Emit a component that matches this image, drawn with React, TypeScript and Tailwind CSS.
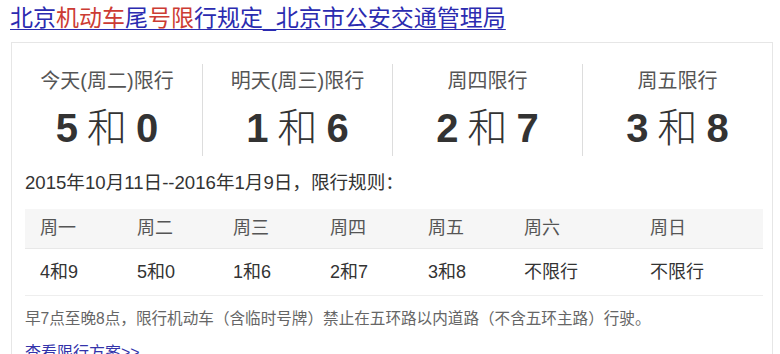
const font = { fontFamily: '"Liberation Sans", "Noto Sans CJK SC", sans-serif' };

const days = [
  { label: '今天(周二)限行', nums: ['5', '0'] },
  { label: '明天(周三)限行', nums: ['1', '6'] },
  { label: '周四限行', nums: ['2', '7'] },
  { label: '周五限行', nums: ['3', '8'] },
];

const week = [
  ['周一', '4和9'],
  ['周二', '5和0'],
  ['周三', '1和6'],
  ['周四', '2和7'],
  ['周五', '3和8'],
  ['周六', '不限行'],
  ['周日', '不限行'],
];

export default function App() {
  return (
    <div className="bg-white w-[780px] h-[354px] overflow-hidden" style={font}>
      <div className="pl-[10px] pt-[3px] text-[23px] leading-[30px] text-[#2b2bb0]">
        <a className="underline decoration-1 underline-offset-[3px] cursor-pointer">
          北京<span className="text-[#cc3b33]">机动车</span>尾<span className="text-[#cc3b33]">号限</span>行规定_北京市公安交通管理局
        </a>
      </div>

      <div className="ml-[11px] mt-[9px] w-[762px] border border-[#e6e6e6] pt-[21px] pl-[13px] pr-[8px]">
        <div className="grid grid-cols-4 -ml-[13px] -mr-[8px]">
          {days.map((d, i) => (
            <div key={i} className={`flex flex-col items-center h-[92px] ${i > 0 ? 'border-l border-[#dddddd]' : ''}`}>
              <div className="mt-[3px] text-[20px] leading-[28px] text-[#555]">{d.label}</div>
              <div className="mt-[9px] text-[40px] leading-[48px] text-[#333] flex items-center">
                <span className="font-bold">{d.nums[0]}</span>
                <span className="mx-[9px] font-light">和</span>
                <span className="font-bold">{d.nums[1]}</span>
              </div>
            </div>
          ))}
        </div>

        <div className="mt-[13px] text-[18.6px] leading-[28px] text-[#333]">2015年10月11日--2016年1月9日，限行规则：</div>

        <div className="mt-[12px] w-[738px] text-[18px] text-[#333]">
          <div className="grid grid-cols-[97px_96px_97px_98px_96px_126px_1fr] bg-[#f6f6f6] h-[40px] items-center border-b border-[#e8e8e8] text-[#555]">
            {week.map(w => (
              <div key={w[0]} className="pl-[15px]">{w[0]}</div>
            ))}
          </div>
          <div className="grid grid-cols-[97px_96px_97px_98px_96px_126px_1fr] h-[47px] items-center border-b border-[#eeeeee]">
            {week.map(w => (
              <div key={w[0]} className="pl-[15px]">{w[1]}</div>
            ))}
          </div>
        </div>

        <div className="mt-[9px] text-[15.6px] leading-[28px] text-[#666]">
          早7点至晚8点，限行机动车（含临时号牌）禁止在五环路以内道路（不含五环主路）行驶。
        </div>
        <div className="mt-[6px] text-[16px] leading-[28px] text-[#3333aa] underline">查看限行方案&gt;&gt;</div>
      </div>
    </div>
  );
}
